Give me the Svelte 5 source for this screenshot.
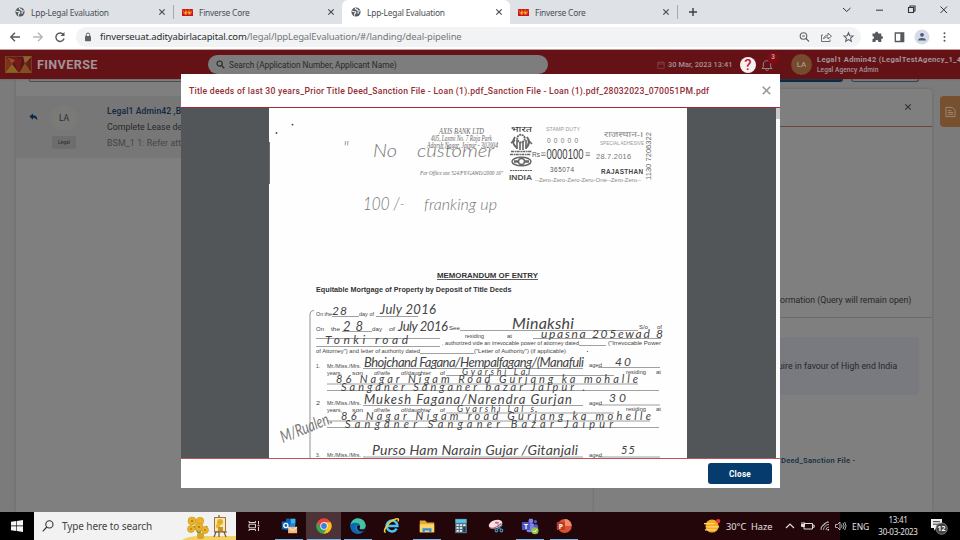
<script>
  const tabs = [
    { title: 'Lpp-Legal Evaluation', globe: true },
    { title: 'Finverse Core', globe: false },
    { title: 'Lpp-Legal Evaluation', globe: true, active: true },
    { title: 'Finverse Core', globe: false }
  ];

  // [x, baseline, width, size, text]
  const printed = [
    [316, 316, 16, 5.5, 'On the'], [359, 316, 15, 5.5, 'day of'],
    [316, 331, 8, 5.5, 'On'], [331, 331, 9, 5.5, 'the'], [372, 331, 10, 5.5, 'day'], [389, 331, 6, 5.5, 'of'], [449, 330, 11, 5.5, 'See'],
    [639, 329, 9, 5.2, 'S/o'], [657, 329, 5, 5.2, 'of'],
    [465, 337.5, 19, 5, 'residing'], [507, 337.5, 5, 5, 'at'],
    [442, 345, 137, 5.4, ', authorized vide an irrevocable power of attorney dated'],
    [608, 344.5, 53, 5.4, '("Irrevocable Power'],
    [316, 353, 104, 5.5, 'of Attorney") and letter of authority dated'],
    [474, 352.5, 92, 5.4, '("Letter of Authority") (if applicable)'],
    [316, 368, 4, 5.3, '1.'], [327, 368, 34, 5.3, 'Mr./Miss./Mrs.'], [589, 367, 13, 5.3, 'aged'],
    [327, 375, 15, 5, 'years,'], [352, 375, 11, 5, 'son'], [374, 375, 16, 5, 'of/wife'], [401, 375, 30, 5, 'of/daughter'], [440, 375, 5, 5, 'of'],
    [626, 374, 20, 5, 'residing'], [656, 374, 5, 5, 'at'],
    [316, 405, 4, 5.3, '2'], [327, 405, 34, 5.3, 'Mr./Miss./Mrs.'], [589, 404.5, 13, 5.3, 'aged'],
    [327, 412, 15, 5, 'years,'], [352, 412, 11, 5, 'son'], [374, 412, 16, 5, 'of/wife'], [401, 412, 30, 5, 'of/daughter'], [440, 412, 5, 5, 'of'],
    [626, 411, 20, 5, 'residing'], [656, 411, 5, 5, 'at'],
    [316, 457, 4, 5.3, '3.'], [327, 457, 34, 5.3, 'Mr./Miss./Mrs.'], [589, 456.5, 13, 5.3, 'aged']
  ];

  const handwritten = [
    [332, 315, 15, 12, '28'], [380, 314, 56, 13, 'July 2016'],
    [343, 331, 20, 13, '28'], [398, 331, 50, 13, 'July 2016'],
    [512, 328.5, 62, 16, 'Minakshi'], [541, 338, 122, 12, 'upasna 205ewad 8'],
    [325, 344, 83, 12, 'Tonki road'],
    [364, 367, 220, 13, 'Bhojchand Fagana/Hempalfagang/(Manafuli'], [615, 365.5, 16, 12, '40'],
    [462, 374.5, 68, 9, 'Gyarshi Lal'],
    [336, 383, 302, 11, '86 Nagar Nigam Road Gurjang ka mohalle'],
    [341, 391, 244, 11, 'Sanganer Sanganer bazar Jaipur .'],
    [364, 404, 208, 13, 'Mukesh Fagana/Narendra Gurjan'], [609, 402, 17, 12, '30'],
    [457, 411.5, 77, 9, 'Gyarshi Lal s'],
    [341, 420, 310, 11, '86 Nagar Nigam road Gurjang ka mohelle'],
    [345, 428, 268, 11, 'Sanganer Sanganer Bazar Jaipur'],
    [372, 455, 206, 14, 'Purso Ham Narain Gujar /Gitanjali'], [621, 453.5, 14, 11, '55']
  ];

  // [x1, x2, y]
  const rules = [
    [332, 359, 316.5], [376, 418, 316.5], [342, 372, 331.5], [460, 638, 330.5], [316, 440, 338.5], [316, 440, 346.5], [533, 661, 338.5],
    [420, 474, 353.5], [579, 606, 345.5], [363, 583, 368.5], [598, 660, 367.5], [446, 614, 375.5], [327, 638, 384], [327, 659, 390.5],
    [363, 583, 405.5], [598, 660, 405], [446, 614, 413], [327, 650, 421], [327, 659, 427.5], [363, 583, 457], [598, 660, 457]
  ];

  const zero = '--Zero-Zero-Zero-Zero-One--Zero-Zero--';
</script>

{#snippet globe()}
  <svg class="fav" viewBox="0 0 11 11"><circle cx="5.5" cy="5.5" r="5" fill="#55595e"/><path d="M1.2 4.4 L3 5.2 5 5.3 5.2 6.6 4 7.4 3.8 9.5 M5 1 L4.8 2.3 6.8 2.6 7 4 8.6 4.6 9.7 4.3 M7 6.2 L8.8 6.7" stroke="#eceef0" stroke-width="1.3" fill="none"/></svg>
{/snippet}

{#snippet gem()}
  <svg class="gem" viewBox="0 0 12 7" preserveAspectRatio="none"><rect width="12" height="7" fill="#c5161d"/><path d="M0 0 L3 3 4 0 6 3 8 0 9 3 12 0 10 5 7 6 6 4 5 6 2 5z" fill="#ee6a1e"/><path d="M3 3 L4 6 5 3z M7 3 L9 6 9 3z" fill="#ffc627"/></svg>
{/snippet}

{#snippet cross()}
  <svg class="cross" viewBox="0 0 8 8"><path d="M1.3 1.3 L6.7 6.7 M6.7 1.3 L1.3 6.7" stroke="currentColor" stroke-width="1.2"/></svg>
{/snippet}

<div class="screen">
  <div class="tabbar">
    {#each tabs as tab, i}
      <div class="tab" class:active={tab.active} class:sep={i === 0 || i === 3}>
        {#if tab.globe}{@render globe()}{:else}{@render gem()}{/if}
        <span class:core={!tab.globe}>{tab.title}</span>
        {@render cross()}
      </div>
    {/each}
    <svg class="plus" viewBox="0 0 10 10"><path d="M5 1V9M1 5H9" stroke="#3b3e42" stroke-width="1.4"/></svg>
    <svg class="winctl" viewBox="0 0 110 20" fill="none" stroke="#333">
      <path d="M3 8 L6.7 11.5 10.5 8 M36 10.2H43"/><path d="M68.5 7.5H73.5V12.5H68.5z M70 7.5V6H75V11H73.5" stroke-width="1.1"/><path d="M100.5 6.5 L107 13 M107 6.5 L100.5 13"/>
    </svg>
  </div>

  <div class="toolbar">
    <svg class="nav" viewBox="0 0 60 14" fill="none" stroke-width="1.4">
      <path d="M11 7H2M6 2.7L1.8 7 6 11.3" stroke="#55585c"/><path d="M24 7H33M29 2.7L33.2 7 29 11.3" stroke="#b4b6b9"/>
      <path d="M58.4 4.3A4.2 4.2 0 1 0 59.1 8.2" transform="translate(-4 .3)" stroke="#55585c"/><path d="M55.5 2V6H51.5z" fill="#55585c"/>
    </svg>
    <div class="omni">
      <svg class="lock" viewBox="0 0 8 10"><rect x="1" y="4" width="6" height="5.2" rx=".6" fill="#5f6368"/><path d="M2.3 4.3V2.7A1.7 1.7 0 0 1 5.7 2.7V4.3" fill="none" stroke="#5f6368"/></svg>
      <span class="url">finverseuat.adityabirlacapital.com<i>/legal/lppLegalEvaluation/#/landing/deal-pipeline</i></span>
      <svg class="omnicons" viewBox="0 0 56 12" fill="none" stroke="#5f6368" stroke-width="1.1">
        <circle cx="4.5" cy="5" r="3.3"/><path d="M7 7.5L10 10.5M3 5H6"/>
        <path d="M24 4H22.5V10.5H31V8.5M24.5 8C25 5.5 26.5 4.3 29 4.2V2.2L32.5 5.2 29 8V6.1C27 6 25.7 6.5 24.5 8z" stroke-width=".9"/>
        <path d="M49.5 1.7L50.8 4.7 54 5 51.6 7.1 52.3 10.3 49.5 8.6 46.7 10.3 47.4 7.1 45 5 48.2 4.7z"/>
      </svg>
    </div>
    <svg class="ext" viewBox="0 0 84 16">
      <path d="M1.5 4.5H4.2C3.7 2.3 7.4 2 7.2 4.5H10.3V7.2C12.6 6.8 12.7 10 10.3 9.8V12.9H7.4C7.5 10.6 4.4 10.4 4.3 12.9H1.5V10C3.6 9.9 3.6 7.1 1.5 7.2z" fill="#55595e"/>
      <path d="M24.3 4H32.7V12.5H24.3z" fill="none" stroke="#55595e" stroke-width="1.3"/><rect x="29.3" y="3.8" width="3.6" height="9" fill="#55595e"/>
      <circle cx="51" cy="8" r="7.5" fill="#d5dbe8"/><circle cx="51" cy="5.8" r="1.9" fill="#4e5b78"/><path d="M47 11.5C47 8.2 55 8.2 55 11.5z" fill="#4e5b78"/>
      <g fill="#55595e"><circle cx="73.5" cy="4.2" r="1"/><circle cx="73.5" cy="8" r="1"/><circle cx="73.5" cy="11.8" r="1"/></g>
    </svg>
  </div>

  <div class="app">
    <header>
      <svg class="logo" viewBox="0 0 27 17"><rect width="27" height="17" fill="#581519"/><path d="M0 0L7 8 0 17z" fill="#7d331b"/><path d="M0 17L7 8 14 17z" fill="#8c6221"/><path d="M6 0L14 17 17 3z" fill="#741a18"/><path d="M14 17L20 7 27 17z" fill="#844c20"/><path d="M18 0L20 8 27 0z" fill="#8d6530"/><path d="M2 1L7 8 10 4z" fill="#994b25"/><path d="M20 7L27 3V14z" fill="#672019"/><rect x=".5" y=".5" width="26" height="16" fill="none" stroke="#80551f" stroke-width=".6"/></svg>
      <b class="brand">FINVERSE</b>
      <div class="search">
        <svg viewBox="0 0 10 10"><circle cx="4" cy="4" r="2.9" fill="none" stroke="#262626" stroke-width="1.2"/><path d="M6 6L9.2 9.2" stroke="#262626" stroke-width="1.3"/></svg>
        <span>Search (Application Number, Applicant Name)</span>
      </div>
      <svg class="cal" viewBox="0 0 8 8"><path d="M.7 1.3H7.2V7.3H.7zM.7 3H7.2M2.3 .4V2M5.6 .4V2" fill="none" stroke="#8d4a42" stroke-width=".7"/></svg>
      <span class="date">30 Mar, 2023 13:41</span>
      <span class="help">?</span>
      <div class="bell">
        <svg viewBox="0 0 12 14"><path d="M1 10.5H11L9.7 9V6C9.7 1.5 2.3 1.5 2.3 6V9zM4.5 11C4.7 13 7.3 13 7.5 11" fill="none" stroke="#9a8d8d" stroke-width=".9"/></svg>
        <em>3</em>
      </div>
      <span class="me">LA</span>
      <div class="who"><b>Legal1 Admin42 (LegalTestAgency_1_43)</b><span>Legal Agency Admin</span></div>
    </header>

    <div class="content">
      <main>
        <div class="field"></div>
        <div class="mail">
          <svg class="reply" viewBox="0 0 9 8"><path d="M4 .4V2.3C7 2.3 8.6 4 8.3 7.5 7.2 5.6 6 5 4 5V6.8L.4 3.5z" fill="#0a2b4b"/></svg>
          <div class="from"><span class="ava">LA</span><span class="chip">Legal</span></div>
          <div class="lines"><b>Legal1 Admin42 ,B</b><span>Complete Lease deed</span><span class="dim">BSM_1 1: Refer attached</span></div>
        </div>
      </main>
      <aside>
        <div class="btns"><i class="solid"></i><i class="line"></i></div>
        <div class="panel">
          <div class="phead">{@render cross()}</div>
          <div class="query">ormation (Query will remain open)</div>
          <div class="quote">uire in favour of High end India</div>
          <b class="deed">Deed_Sanction File -</b>
        </div>
      </aside>
      <div class="rail"><span><svg viewBox="0 0 12 12" fill="none" stroke="#a08c76" stroke-width="1"><path d="M1 1H8L11 4V11H1zM3 4.5H7M3 6.5H9M3 8.5H9"/></svg></span></div>
    </div>

    <section class="modal">
      <div class="mhead"><b>Title deeds of last 30 years_Prior Title Deed_Sanction File - Loan (1).pdf_Sanction File - Loan (1).pdf_28032023_070051PM.pdf</b>{@render cross()}</div>
      <div class="viewer">
        <div class="canvas">
          <svg class="page" viewBox="269 108 418 350">
            <rect x="269" y="108" width="418" height="350" fill="#fefefe"/>
            <path d="M269.5 142V184" stroke="#333" stroke-width="1" opacity=".7"/>
            <g fill="#444"><circle cx="292.5" cy="124.7" r=".9"/><circle cx="276.5" cy="133" r=".9"/><circle cx="587.5" cy="351.5" r=".6"/></g>
            <g class="pencil">
              <text x="343" y="154" font-size="18">"</text>
              <text x="373" y="157" font-size="17" textLength="24" lengthAdjust="spacingAndGlyphs">No</text>
              <text x="417" y="157" font-size="17" textLength="77" lengthAdjust="spacingAndGlyphs">customer</text>
              <text x="363" y="210" font-size="17" textLength="42" lengthAdjust="spacingAndGlyphs">100 /-</text>
              <text x="424" y="210" font-size="16" textLength="73" lengthAdjust="spacingAndGlyphs">franking up</text>
            </g>
            <g class="bank">
              <text x="439" y="133.5" font-size="8.5" textLength="45" lengthAdjust="spacingAndGlyphs">AXIS BANK LTD</text>
              <text x="431" y="140.5" font-size="7.5" textLength="61" lengthAdjust="spacingAndGlyphs">405, Laxmi No. 7 Raja Park</text>
              <text x="427" y="147.5" font-size="7.5" textLength="71" lengthAdjust="spacingAndGlyphs">Adarsh Nagar, Jaipur - 302004</text>
              <text x="420" y="174.5" font-size="5.8" textLength="83" lengthAdjust="spacingAndGlyphs">For Office use 524/FY/GAWD/2000 16"</text>
            </g>
            <g class="stamp">
              <text x="511" y="132" font-size="8" textLength="21" lengthAdjust="spacingAndGlyphs" fill="#333">भारत</text>
              <text x="546" y="131.3" font-size="5.4" textLength="34" fill="#999">STAMP DUTY</text>
              <text x="547" y="142.5" font-size="6.5" textLength="31" fill="#777">00000</text>
              <text x="532" y="157" font-size="7" textLength="8" lengthAdjust="spacingAndGlyphs" fill="#555">Rs</text>
              <text x="540.5" y="157" font-size="9" fill="#777">≡</text>
              <text x="546.5" y="158.5" font-size="14" textLength="37" lengthAdjust="spacingAndGlyphs" fill="#444">0000100</text>
              <text x="585" y="157" font-size="9" fill="#777">≡</text>
              <text x="596" y="158.5" font-size="7.4" textLength="35" fill="#777">28.7.2016</text>
              <text x="550" y="172" font-size="6.4" textLength="24" fill="#555">365074</text>
              <text x="601" y="174" font-size="6.4" font-weight="700" textLength="42" fill="#444">RAJASTHAN</text>
              <text x="509" y="179.5" font-size="7.8" font-weight="700" textLength="23" lengthAdjust="spacingAndGlyphs" fill="#555">INDIA</text>
              <text x="535" y="182" font-size="6" textLength="106" lengthAdjust="spacingAndGlyphs" fill="#888">{zero}</text>
              <text x="604" y="137" font-size="7.5" textLength="39" lengthAdjust="spacingAndGlyphs" fill="#888">राजस्थान-I</text>
              <text x="600" y="145" font-size="4.6" textLength="44" fill="#999">SPECIAL ADHESIVE</text>
              <text transform="translate(650.5 180) rotate(-90)" font-size="7.5" textLength="48" lengthAdjust="spacingAndGlyphs" fill="#666">1130 7206322</text>
            </g>
            <g fill="none" stroke="#666">
              <path d="M515 137C512 141 513 145 517 148M527 137C530 141 529 145 526 148" stroke-width="2"/><circle cx="521" cy="138.5" r="3.8" stroke-width="1.8" stroke-dasharray="2 .6"/><path d="M517 140V149M520 142V150M523 142V150M526 140V149" stroke-width="1.6"/><path d="M511 143L515 140M528 140L532 144" stroke-width="1.6"/><path d="M511 151.5H532M510 154.5H531" stroke-dasharray="3 .7 1.5 .5" stroke-width="1.6"/><ellipse cx="521.5" cy="161.5" rx="9.5" ry="4.3" stroke-width="1.5"/><circle cx="521.5" cy="161.5" r="3" stroke-width="1.4"/><path d="M514 161.5H518M525 161.5H529" stroke-width="2.4"/><path d="M510 170.5H532" stroke-width="1" stroke-dasharray="2 .5"/>
            </g>
            <g class="title">
              <text x="437" y="278" font-size="8" textLength="101" lengthAdjust="spacingAndGlyphs">MEMORANDUM OF ENTRY</text>
              <path d="M437 279.5H538" stroke="#333" stroke-width=".8"/>
              <text x="316" y="291.6" font-size="7" textLength="195.5" lengthAdjust="spacingAndGlyphs">Equitable Mortgage of Property by Deposit of Title Deeds</text>
            </g>
            <path d="M314 310.5Q310 310.5 310 315V458" fill="none" stroke="#777" stroke-width=".8"/>
            {#each rules as [a, b, y]}
              <path d="M{a} {y}H{b}" stroke="#777" stroke-width=".7"/>
            {/each}
            <g class="print">
              {#each printed as [x, y, w, s, t]}
                <text {x} {y} font-size={s} textLength={w} lengthAdjust="spacingAndGlyphs">{t}</text>
              {/each}
            </g>
            <g class="hand">
              {#each handwritten as [x, y, w, s, t]}
                <text {x} {y} font-size={s} textLength={w}>{t}</text>
              {/each}
              <text transform="translate(283 443) rotate(-22)" font-size="17" textLength="54" lengthAdjust="spacingAndGlyphs" fill="#777">M/Rualen.</text>
            </g>
          </svg>
        </div>
        <div class="scroll"><i></i></div>
      </div>
      <div class="mfoot"><button>Close</button></div>
    </section>
  </div>

  <footer class="taskbar">
    <div class="start"><svg viewBox="0 0 12 12" fill="#f4f4f4"><path d="M0 1.7L5.2 1V5.6H0zM5.8 .9L12 0V5.6H5.8zM0 6.2H5.2V11L0 10.3zM5.8 6.2H12V12L5.8 11.1z"/></svg></div>
    <div class="find">
      <svg class="mag" viewBox="0 0 12 12" fill="none" stroke="#333" stroke-width="1.1"><circle cx="7.4" cy="4.4" r="3.6"/><path d="M4.8 7L.7 11.3"/></svg>
      <span>Type here to search</span>
      <svg class="art" viewBox="0 0 56 28">
        <path d="M2 28Q8 24 20 24H56V28z" fill="#f2d264"/><path d="M14 14L21 25 27 14M20 8V24" stroke="#73803a" stroke-width="1.5" fill="none"/>
        <g fill="#e9b526" stroke="#d49a22" stroke-width=".7"><circle cx="12" cy="9" r="4"/><circle cx="20" cy="9" r="3.7"/><circle cx="11" cy="17" r="3.5"/><circle cx="19" cy="15" r="4"/><circle cx="25" cy="18" r="3.5"/></g><g fill="#b98420"><circle cx="12" cy="9" r="1.3"/><circle cx="19" cy="15" r="1.3"/><circle cx="11" cy="17" r="1.1"/><circle cx="25" cy="18" r="1.1"/></g>
        <rect x="17" y="21" width="7" height="6" rx="2" fill="#dba625"/>
        <path d="M39 3V25M34 25L36 20M46 25L44 20M34 20H47" stroke="#79532f" stroke-width="1.2"/><rect x="34.5" y="5.5" width="11" height="14" fill="#f5e8b6" stroke="#9b7440"/><circle cx="40" cy="10" r="3" fill="#e4ad1d"/><circle cx="38" cy="14" r="2.2" fill="#edb62c"/><rect x="38" y="15" width="5" height="4" fill="#c99429"/>
      </svg>
    </div>
    <svg class="view" viewBox="0 0 12 12" fill="none" stroke="#d9d4d5"><path d="M1 1V2.5H7.5V1M1 11V9.5H7.5V11M1 4.2H7.5V7.8H1zM10.5 1V4.5M10.5 7V11M9.5 5.7H11.5"/></svg>
    <div class="apps">
      <div class="on"><svg viewBox="0 0 20 20"><rect x="7" y="2" width="10" height="12" fill="#2188d9"/><path d="M7 2H12V8H7z" fill="#075fae"/><path d="M12 2H17V7H12z" fill="#39b5f2"/><rect x="2" y="5" width="9" height="9" rx="1" fill="#0d68bb"/><circle cx="6.5" cy="9.5" r="2.3" fill="none" stroke="#fff" stroke-width="1.4"/><rect x="9" y="11" width="10" height="7" fill="#f5ba7c"/><path d="M9 11L14 15 19 11" fill="none" stroke="#fff2df"/></svg></div>
      <div class="on cur"><svg viewBox="0 0 20 20"><circle cx="10" cy="10" r="8.5" fill="#e9453a"/><path d="M2.6 5.8A8.5 8.5 0 0 0 9.5 18.5L13.8 12 6.2 12z" fill="#31a853"/><path d="M10 5.9H17.4A8.5 8.5 0 0 1 9.5 18.5L13.8 12z" fill="#fbc116"/><circle cx="10" cy="10" r="4.1" fill="#fff"/><circle cx="10" cy="10" r="3.2" fill="#3d7ee8"/></svg></div>
      <div class="on"><svg viewBox="0 0 20 20"><circle cx="10" cy="10" r="8.5" fill="#1683cb"/><path d="M1.7 8.5A8.5 8.5 0 0 1 18.5 9C19 14.2 12.3 14.2 11.5 12.5 14 9 8 4.5 1.7 8.5z" fill="#43c3a0"/><path d="M1.7 8.5C6 4.8 12.5 6.5 12.3 10 9 7.5 6.5 10 7.5 13 8.7 16.3 13 17 16 16 9.5 21.5 .5 17 1.7 8.5z" fill="#0e68ae"/><path d="M11.5 12.5C12.3 14.2 15.5 14.3 17.8 13L16.3 15.8C12 17 8.7 14.5 9 11 9.3 9.5 10.5 9 12.3 10 12.4 11 12 12 11.5 12.5z" fill="#23060a"/></svg></div>
      <div><svg viewBox="0 0 20 20"><path d="M15.2 13A6 6 0 1 1 16 10H5" fill="none" stroke="#49c6f4" stroke-width="2.8"/><path d="M3 17C-1 17 5 6 12 3 17 1 18 2 16.5 5" fill="none" stroke="#f3ca3c" stroke-width="1.7"/></svg></div>
      <div class="on"><svg viewBox="0 0 20 20"><path d="M2 4H8L10 6H18V17H2z" fill="#e5a632"/><path d="M2 8H18V17H2z" fill="#fbd56a"/><path d="M5 17V12.5H15V17H12.5V15H7.5V17z" fill="#2e91d8"/></svg></div>
      <div><svg viewBox="0 0 20 20"><rect x="3.5" y="2" width="13" height="16" fill="#57707e"/><rect x="4" y="2.5" width="12" height="4" fill="#58c5ec"/><g fill="#e6edf1"><rect x="5" y="8" width="2.5" height="2"/><rect x="8.7" y="8" width="2.5" height="2"/><rect x="12.5" y="8" width="2.5" height="2"/><rect x="5" y="11.2" width="2.5" height="2"/><rect x="8.7" y="11.2" width="2.5" height="2"/><rect x="5" y="14.5" width="2.5" height="2"/><rect x="8.7" y="14.5" width="2.5" height="2"/></g><rect x="12.5" y="11.2" width="2.5" height="5.3" fill="#153f62"/></svg></div>
      <div><svg viewBox="0 0 20 20"><ellipse cx="9.5" cy="8" rx="7.8" ry="4.5" fill="#f5dfe1" transform="rotate(-17 9.5 8)"/><path d="M3 12Q8 14 16 7" fill="none" stroke="#c8575e" stroke-width="1.2"/><ellipse cx="11" cy="6.5" rx="2.4" ry="1.1" fill="#c96a72"/><g fill="none" stroke="#4792b9" stroke-width="1.2"><path d="M12 8L15 14M17 9L11 14"/><circle cx="10.5" cy="15" r="1.5"/><circle cx="16" cy="15" r="1.5"/></g></svg></div>
      <div class="on"><svg viewBox="0 0 20 20"><circle cx="11" cy="4.5" r="2.7" fill="#7b83eb"/><circle cx="16" cy="5.2" r="1.8" fill="#5059c9"/><rect x="6" y="7" width="9" height="10" rx="2.5" fill="#7b83eb"/><rect x="14" y="8" width="5" height="7" rx="2" fill="#5059c9"/><rect x="1" y="5.5" width="9" height="9" rx="1" fill="#4b53bc"/><text x="5.5" y="12.8" text-anchor="middle" font-size="7.5" font-weight="700" fill="#fff">T</text><circle cx="15.5" cy="15.3" r="4" fill="#91c13e"/><path d="M13.5 15.2L15 16.8 17.7 13.8" stroke="#fff" stroke-width="1.1" fill="none"/></svg></div>
      <div class="on"><svg viewBox="0 0 20 20"><circle cx="10.8" cy="10" r="7.8" fill="#d95234"/><path d="M10.8 2.2A7.8 7.8 0 0 1 18.6 10H10.8z" fill="#f28a6a"/><rect x="2" y="5.5" width="9" height="9" rx="1" fill="#bd3b20"/><text x="6.5" y="12.8" text-anchor="middle" font-size="7.5" font-weight="700" fill="#fff">P</text></svg></div>
    </div>
    <div class="tray">
      <svg class="sun" viewBox="0 0 18 16"><circle cx="8.5" cy="8" r="7" fill="#f6a925"/><path d="M0 5.5H11M3 9H16M1 12H13" stroke="#ffdc72" stroke-width="1.3"/><circle cx="15" cy="2.8" r="2.3" fill="#e53932"/></svg>
      <span class="temp">30°C&nbsp; Haze</span>
      <svg class="sys" viewBox="0 0 64 14" fill="none" stroke="#ddd"><path d="M2 9L6 5 10 9" stroke-width="1.2"/><path d="M20 4.5H28.5V10H20zM29 6.2H30.2V8.3H29"/><path d="M18 3V6M20 3V6M17.5 5.5H20.5V7.5H17.5z" fill="#ddd"/><path d="M37 11A8 8 0 0 1 45 3M39.5 11A5.5 5.5 0 0 1 45 5.5M42 11A3 3 0 0 1 45 8M36.5 9L44 2.5" stroke="#aaa5a6"/><rect x="43.5" y="10" width="1.5" height="1.5" fill="#ddd" stroke="none"/><path d="M51.5 5.5H53.5L56 3V11L53.5 8.5H51.5zM57.5 5.5Q58.7 7 57.5 8.7M59 4Q61.2 7 59 10M60.7 3Q63.5 7 60.7 11" stroke-width=".8"/></svg>
    </div>
    <div class="clock"><span class="eng">ENG</span><div class="time"><span>13:41</span><span class="day">30-03-2023</span></div>
      <div class="note"><svg viewBox="0 0 18 18"><path d="M1 2H12V11H6.5L4 13.5V11H1z" fill="#f1f1f1"/><path d="M3 4.7H10M3 7.2H10" stroke="#222" stroke-width=".9"/><circle cx="11.6" cy="11.6" r="5.7" fill="#444" stroke="#999" stroke-width=".7"/></svg><b>12</b></div>
    </div>
  </footer>
</div>

<style>
  :global(body) { margin: 0; overflow: hidden; }
  .screen { width: 960px; height: 540px; display: flex; flex-direction: column; overflow: hidden; font-family: Roboto, sans-serif; white-space: nowrap; }
  .screen * { box-sizing: border-box; }
  svg { flex: none; display: block; }
  .cross { width: 8px; height: 8px; }

  .tabbar { height: 24px; flex: none; background: #dee1e6; display: flex; align-items: center; padding-left: 6px; font: 8.4px "Noto Sans", sans-serif; color: #4b4e52; }
  .tab { width: 168px; height: 24px; display: flex; align-items: center; padding: 0 7px 0 9px; gap: 6px; }
  .tab span { flex: 1; letter-spacing: -.2px; }
  .tab .core { letter-spacing: -.22px; }
  .tab.active { background: #fff; border-radius: 6px 6px 0 0; }
  .tab.sep { border-right: 1px solid #a5a8ac; height: 14px; }
  .tab .cross { color: #4b4e52; }
  .fav { width: 10px; height: 10px; }
  .gem { width: 11px; height: 7px; margin-left: -1px; }
  .plus { width: 10px; height: 10px; margin-left: 10px; }
  .winctl { width: 110px; height: 20px; margin: -4px 10px 0 auto; }

  .toolbar { height: 25px; flex: none; background: #fff; display: flex; align-items: center; }
  .nav { width: 60px; height: 14px; margin-left: 9px; }
  .omni { width: 785px; height: 20px; margin-left: 7px; border-radius: 10px; background: #f1f3f4; display: flex; align-items: center; padding-left: 8px; }
  .lock { width: 8px; height: 10px; }
  .url { margin-left: 8px; font: 9.5px "Noto Sans", sans-serif; color: #2b2d30; letter-spacing: -.13px; }
  .url i { font-style: normal; color: #74777b; }
  .omnicons { width: 56px; height: 12px; margin: 0 6px 0 auto; }
  .ext { width: 84px; height: 16px; margin-left: 10px; }

  .app { flex: 1; min-height: 0; display: flex; flex-direction: column; position: relative; background: #7b7b7b; border-top: 1px solid #c79a9c; overflow: hidden; }
  header { height: 29px; flex: none; background: #651217; display: flex; align-items: center; padding-left: 5px; color: #a19596; box-shadow: 0 1px 1px #5554; position: relative; }
  header > * { flex: none; }
  .logo { width: 27px; height: 17px; }
  .brand { width: 62px; margin-left: 5px; font: 700 12.6px Roboto, sans-serif; letter-spacing: .38px; color: #a39394; }
  .search { width: 340px; height: 19px; margin-left: 109px; border-radius: 10px; background: #7d7d7d; color: #292929; display: flex; align-items: center; padding-left: 8px; font-size: 8.3px; gap: 4px; }
  .search svg { width: 9px; height: 9px; }
  .search span { letter-spacing: -.03px; }
  .cal { width: 8px; height: 8px; margin-left: 109px; }
  .date { width: 65px; margin-left: 3px; font-size: 7.4px; font-weight: 500; letter-spacing: .05px; }
  .help { width: 16px; height: 16px; margin-left: 7px; border-radius: 50%; background: #f8f1f1; color: #c2242e; font: 500 15px/16px Roboto, sans-serif; text-align: center; }
  .bell { width: 14px; height: 14px; margin-left: 5px; position: relative; }
  .bell svg { width: 12px; height: 14px; }
  .bell em { position: absolute; left: 6px; top: -6px; width: 12px; height: 12px; border-radius: 50%; background: #7f0c12; font: 700 6.5px/11px Roboto, sans-serif; text-align: center; color: #b8a5a5; }
  .me { width: 21px; height: 21px; margin-left: 16px; border-radius: 50%; background: #764a2d; font: 500 8px/21px Roboto, sans-serif; text-align: center; color: #a7988c; }
  .who { margin-left: 5px; display: flex; flex-direction: column; gap: 2px; font-size: 6.6px; line-height: 8px; }
  .who b { font-size: 7.6px; font-weight: 700; letter-spacing: .27px; }
  .who span { font-weight: 500; letter-spacing: .05px; }

  .content { flex: 1; display: flex; min-height: 0; }
  main { width: 578px; margin-left: 16px; background: #7f7f7f; box-shadow: 0 0 3px #5558; }
  .field { height: 3px; margin-left: 13px; border: solid #4e4e4e; border-width: 0 0 1px 1px; border-radius: 0 0 0 2px; }
  .mail { height: 62px; margin-top: 14px; background: #777; display: flex; padding: 5px 0 0 13px; }
  .reply { width: 9px; height: 8px; margin-top: 12px; }
  .from { width: 26px; margin-left: 13px; display: flex; flex-direction: column; align-items: center; }
  .ava { width: 26px; height: 26px; margin-top: 4px; border-radius: 50%; background: #7a7a77; font: 8.5px/26px Roboto, sans-serif; text-align: center; color: #2d2d2d; }
  .chip { width: 24px; height: 13px; margin-top: 5px; background: #6d6d6d; border-radius: 2px; font: 500 5px/13px Roboto, sans-serif; text-align: center; color: #343434; }
  .lines { margin-left: 30px; display: flex; flex-direction: column; font-size: 8.8px; line-height: 16px; color: #292929; padding-top: 2px; }
  .lines b { color: #152b43; font-weight: 600; font-size: 8.6px; letter-spacing: .1px; }
  .lines .dim { color: #454545; letter-spacing: .12px; }
  aside { width: 338px; background: #7b7b7b; display: flex; flex-direction: column; }
  .btns { height: 10px; display: flex; padding-left: 177px; gap: 8px; align-items: flex-start; flex: none; }
  .btns i { height: 3px; border-radius: 0 0 3px 3px; width: 72px; }
  .btns .solid { background: #0a2a48; }
  .btns .line { width: 68px; border: solid #314558; border-width: 0 1px 1px; }
  .panel { flex: 1; background: #7f7f7f; border-radius: 4px 4px 0 0; box-shadow: 0 0 3px #4446; color: #272727; font-size: 8.7px; display: flex; flex-direction: column; }
  .phead { height: 38px; border-bottom: 1px solid #6b4540; display: flex; justify-content: flex-end; padding: 14px 20px 0 0; flex: none; color: #333; }
  .query { height: 191px; border-bottom: 1px solid #6b6b6b; padding: 168px 0 0 186px; letter-spacing: .01px; flex: none; }
  .quote { height: 58px; margin: 19px 13px 0 10px; background: #787a80; border-radius: 3px; padding: 24px 0 0 174px; line-height: 10px; letter-spacing: .04px; flex: none; }
  .deed { margin: 61px 0 0 187px; font-size: 7.5px; font-weight: 600; color: #17303f; letter-spacing: .3px; }
  .rail { flex: 1; padding-top: 17px; }
  .rail span { width: 20px; height: 31px; margin-left: 8px; background: #76502f; border-radius: 4px 0 0 4px; display: flex; align-items: center; justify-content: center; }
  .rail svg { width: 11px; height: 12px; }

  .modal { position: absolute; left: 181px; top: 24px; width: 599px; height: 414px; background: #fff; display: flex; flex-direction: column; }
  .mhead { height: 34px; border-bottom: 1px solid #a62a35; display: flex; align-items: center; justify-content: space-between; padding: 0 8px 0 8px; flex: none; }
  .mhead b { font-size: 8.6px; font-weight: 500; color: #942d34; letter-spacing: .27px; }
  .mhead .cross { width: 11px; height: 11px; color: #999; }
  .viewer { height: 351px; display: flex; border-bottom: 1px solid #bf515a; flex: none; }
  .canvas { width: 595px; background: #525659; padding-left: 88px; overflow: hidden; }
  .page { width: 418px; height: 350px; }
  .scroll { flex: 1; background: #fafafa; }
  .scroll i { display: block; height: 11px; background: #c9c9c9; }
  .mfoot { flex: 1; display: flex; justify-content: flex-end; align-items: center; padding-right: 8px; }
  .mfoot button { width: 64px; height: 21px; border: 0; border-radius: 3px; background: #053b6d; color: #fff; font: 700 8.2px Roboto, sans-serif; letter-spacing: .25px; padding: 0; }

  .pencil { font-family: Lato, sans-serif; font-style: italic; font-weight: 300; fill: #777; }
  .bank { font-family: "Liberation Serif", serif; font-style: italic; fill: #666; }
  .stamp { font-family: "Liberation Sans", "Noto Sans Devanagari", sans-serif; }
  .title { font-family: "Liberation Sans", sans-serif; font-weight: 700; fill: #333; }
  .print { font-family: "Liberation Sans", sans-serif; fill: #444; }
  .hand { font-family: Lato, sans-serif; font-style: italic; font-weight: 400; fill: #444; }

  .taskbar { height: 28px; flex: none; display: flex; align-items: center; background: #23060a; color: #e4e0e1; font-family: "Noto Sans", sans-serif; }
  .start { width: 34px; height: 28px; background: #000; display: flex; align-items: center; justify-content: center; }
  .start svg { width: 12px; height: 12px; }
  .find { width: 202px; height: 28px; background: #f2f2f2; display: flex; align-items: center; padding-left: 8px; color: #444; font-size: 10px; }
  .find span { margin-left: 8px; letter-spacing: -.1px; }
  .mag { width: 12px; height: 12px; }
  .art { width: 56px; height: 28px; margin-left: auto; }
  .view { width: 12px; height: 12px; margin: 0 12px; }
  .apps { display: flex; height: 28px; }
  .apps div { width: 34.4px; height: 28px; display: flex; align-items: center; justify-content: center; }
  .apps svg { width: 18px; height: 18px; }
  .apps .on { background: linear-gradient(#75b5ea, #75b5ea) center bottom / 28px 1.5px no-repeat; }
  .apps .cur { background: linear-gradient(#75b5ea, #75b5ea) center bottom / 34px 1.5px no-repeat, #4c3337; }
  .tray { margin-left: auto; height: 28px; display: flex; align-items: center; }
  .sun { width: 17px; height: 16px; }
  .temp { width: 49px; margin-left: 5px; font-size: 9.2px; }
  .sys { width: 64px; height: 14px; margin-left: 9px; margin-right: -8px; position: relative; }
  .clock { width: 120px; height: 28px; background: #000; display: flex; align-items: center; padding-left: 12px; }
  .eng { font-size: 8.5px; letter-spacing: -.1px; width: 17px; }
  .time { width: 42px; margin-left: 8px; display: flex; flex-direction: column; align-items: center; font-size: 8px; line-height: 12px; letter-spacing: -.25px; }
  .note { width: 18px; height: 18px; margin-left: 11px; position: relative; }
  .note svg { width: 18px; height: 18px; }
  .note b { position: absolute; left: 6px; top: 7px; width: 11px; text-align: center; font-size: 7px; line-height: 9px; color: #fff; }
</style>
